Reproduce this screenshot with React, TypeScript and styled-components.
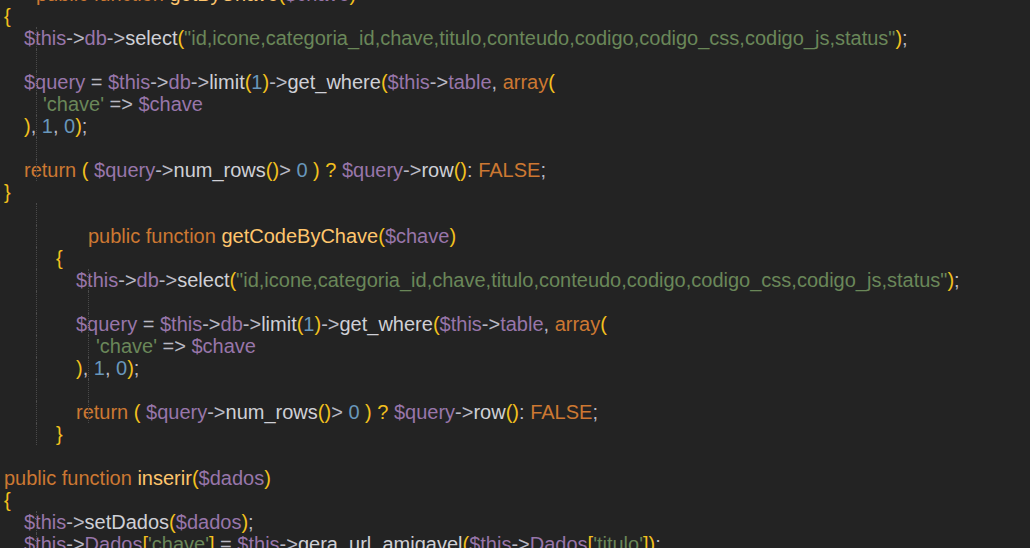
import React from 'react'
import styled, { createGlobalStyle } from 'styled-components'

const Global = createGlobalStyle`
  html, body { margin: 0; background: #232323; overflow: hidden; }
`

type Kind = 'v' | 'm' | 's' | 'k' | 'n' | 'p' | 'o' | 'f'
type Tok = [Kind, string]

const colors: Record<Kind, string> = {
  v: '#9876aa',
  m: '#cfd0d6',
  s: '#6a8759',
  k: '#cc7832',
  n: '#6897bb',
  p: '#f2c01e',
  o: '#b9b9c4',
  f: '#ffc66d',
}

const Editor = styled.div`
  width: 1030px;
  height: 548px;
  overflow: hidden;
  background: #232323;
  font-family: 'Liberation Sans', Arial, sans-serif;
  font-size: 20px;
`

const Code = styled.div`
  margin-top: -17px;
`

const Line = styled.div<{ $indent: number }>`
  position: relative;
  height: 22px;
  line-height: 22px;
  padding-left: ${({ $indent }) => $indent}px;
  white-space: pre;
`

const Guide = styled.span<{ $x: number }>`
  position: absolute;
  left: ${({ $x }) => $x}px;
  top: 0;
  bottom: 0;
  border-left: 1px dotted #4a4a4a;
`

const Token = styled.span<{ $kind: Kind }>`
  color: ${({ $kind }) => colors[$kind]};
`

const select = (): Tok[] => [
  ['v', '$this'], ['o', '->'], ['v', 'db'], ['o', '->'], ['m', 'select'], ['p', '('],
  ['s', '"id,icone,categoria_id,chave,titulo,conteudo,codigo,codigo_css,codigo_js,status"'],
  ['p', ')'], ['o', ';'],
]
const query = (): Tok[] => [
  ['v', '$query'], ['o', ' = '], ['v', '$this'], ['o', '->'], ['v', 'db'], ['o', '->'],
  ['m', 'limit'], ['p', '('], ['n', '1'], ['p', ')'], ['o', '->'], ['m', 'get_where'], ['p', '('],
  ['v', '$this'], ['o', '->'], ['v', 'table'], ['o', ', '], ['k', 'array'], ['p', '('],
]
const chave = (): Tok[] => [['s', "'chave'"], ['o', ' => '], ['v', '$chave']]
const close = (): Tok[] => [['p', ')'], ['o', ', '], ['n', '1'], ['o', ', '], ['n', '0'], ['p', ')'], ['o', ';']]
const ret = (): Tok[] => [
  ['k', 'return '], ['p', '( '], ['v', '$query'], ['o', '->'], ['m', 'num_rows'], ['p', '()'],
  ['o', '> '], ['n', '0'], ['p', ' ) ? '], ['v', '$query'], ['o', '->'], ['m', 'row'], ['p', '()'],
  ['o', ': '], ['k', 'FALSE'], ['o', ';'],
]

const lines: { indent: number; guides?: number[]; toks: Tok[] }[] = [
  { indent: 36, toks: [['k', 'public function '], ['f', 'getByChave'], ['p', '('], ['v', '$chave'], ['p', ')']] },
  { indent: 4, toks: [['p', '{']] },
  { indent: 24, guides: [36], toks: select() },
  { indent: 24, guides: [36], toks: [] },
  { indent: 24, guides: [36], toks: query() },
  { indent: 43, guides: [36], toks: chave() },
  { indent: 24, guides: [36], toks: close() },
  { indent: 24, guides: [36], toks: [] },
  { indent: 24, guides: [36], toks: ret() },
  { indent: 4, toks: [['p', '}']] },
  { indent: 0, guides: [36], toks: [] },
  { indent: 88, guides: [36], toks: [['k', 'public function '], ['f', 'getCodeByChave'], ['p', '('], ['v', '$chave'], ['p', ')']] },
  { indent: 56, guides: [36], toks: [['p', '{']] },
  { indent: 76, guides: [36, 88], toks: select() },
  { indent: 76, guides: [36, 88], toks: [] },
  { indent: 76, guides: [36, 88], toks: query() },
  { indent: 96, guides: [36, 88], toks: chave() },
  { indent: 76, guides: [36, 88], toks: close() },
  { indent: 76, guides: [36, 88], toks: [] },
  { indent: 76, guides: [36, 88], toks: ret() },
  { indent: 56, guides: [36], toks: [['p', '}']] },
  { indent: 0, toks: [] },
  { indent: 4, toks: [['k', 'public function '], ['f', 'inserir'], ['p', '('], ['v', '$dados'], ['p', ')']] },
  { indent: 4, toks: [['p', '{']] },
  { indent: 24, guides: [36], toks: [['v', '$this'], ['o', '->'], ['m', 'setDados'], ['p', '('], ['v', '$dados'], ['p', ')'], ['o', ';']] },
  {
    indent: 24, guides: [36], toks: [
      ['v', '$this'], ['o', '->'], ['v', 'Dados'], ['p', '['], ['s', "'chave'"], ['p', ']'], ['o', ' = '],
      ['v', '$this'], ['o', '->'], ['m', 'gera_url_amigavel'], ['p', '('], ['v', '$this'], ['o', '->'],
      ['v', 'Dados'], ['p', '['], ['s', "'titulo'"], ['p', ']'], ['p', ')'], ['o', ';'],
    ],
  },
]

export default function App() {
  return (
    <Editor>
      <Global />
      <Code>
        {lines.map((l, i) => (
          <Line key={i} $indent={l.indent}>
            {l.guides?.map((g) => <Guide key={g} $x={g} />)}
            {l.toks.map(([k, t], j) => (
              <Token key={j} $kind={k}>{t}</Token>
            ))}
            {l.toks.length === 0 ? ' ' : null}
          </Line>
        ))}
      </Code>
    </Editor>
  )
}
